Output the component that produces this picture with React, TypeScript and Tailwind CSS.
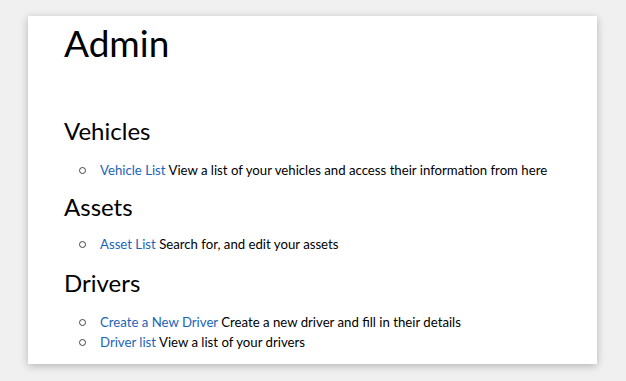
export default function App() {
  const link = "text-[#1a64b8]";
  const Bullet = () => (
    <span className="inline-block shrink-0 w-[7px] h-[7px] rounded-full border-[1.5px] border-[#444] ml-[15px] mr-[14px]" />
  );
  return (
    <div className="w-[626px] h-[381px] bg-[#f0f0f0] pt-[16px] pl-[28px]" style={{ fontFamily: "Lato, 'Noto Sans', sans-serif" }}>
      <div className="w-[569px] h-[348px] bg-white shadow-[0_2px_8px_rgba(0,0,0,0.25)] pl-[36px] pt-[5px] text-black">
        <h1 className="text-[37px] leading-[44px] font-normal">Admin</h1>
        <h2 className="text-[24px] leading-[30px] mt-[51px]">Vehicles</h2>
        <ul className="mt-[14px] text-[13.2px] leading-[20px]">
          <li className="flex items-center"><Bullet /><span><a className={link}>Vehicle List</a> View a list of your vehicles and access their information from here</span></li>
        </ul>
        <h2 className="text-[24px] leading-[30px] mt-[12px]">Assets</h2>
        <ul className="mt-[12px] text-[13.2px] leading-[20px]">
          <li className="flex items-center"><Bullet /><span><a className={link}>Asset List</a> Search for, and edit your assets</span></li>
        </ul>
        <h2 className="text-[24px] leading-[30px] mt-[14px]">Drivers</h2>
        <ul className="mt-[14px] text-[13.2px] leading-[20px]">
          <li className="flex items-center"><Bullet /><span><a className={link}>Create a New Driver</a> Create a new driver and fill in their details</span></li>
          <li className="flex items-center"><Bullet /><span><a className={link}>Driver list</a> View a list of your drivers</span></li>
        </ul>
      </div>
    </div>
  );
}
